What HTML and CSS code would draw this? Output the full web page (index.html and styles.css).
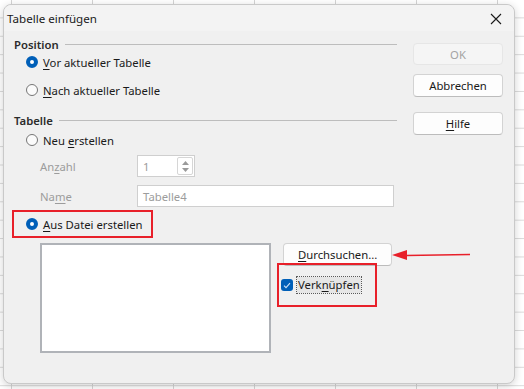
FILE: index.html
```html
<!DOCTYPE html>
<html>
<head>
  <title>Tabelle einfügen</title>
  <meta name="viewport" content="width=device-width, initial-scale=1.0">
  <link rel="stylesheet" href="styles.css">
</head>
<body>
  <div class="dialog">
    <div class="titlebar">
      <span class="title">Tabelle einfügen</span>
      <svg class="close" width="12" height="12" viewBox="0 0 12 12">
        <path d="M1 1 L11 11 M11 1 L1 11" stroke="#1a1a1a" stroke-width="1.1" fill="none"/>
      </svg>
    </div>

    <div class="content">
      <div class="main">
        <div class="group-head"><span>Position</span><span class="rule"></span></div>
        <div class="radio-row first">
          <span class="radio checked"></span><span><u>V</u>or aktueller Tabelle</span>
        </div>
        <div class="radio-row second">
          <span class="radio"></span><span><u>N</u>ach aktueller Tabelle</span>
        </div>

        <div class="group-head head2"><span>Tabelle</span><span class="rule"></span></div>
        <div class="radio-row third">
          <span class="radio"></span><span>Neu <u>e</u>rstellen</span>
        </div>
        <div class="field-row">
          <span class="field-label">An<u>z</u>ahl</span>
          <div class="spin">
            <span class="value">1</span>
            <span class="spin-btn">
              <svg width="7" height="4" viewBox="0 0 7 4"><path d="M0 4 L3.5 0 L7 4 Z" fill="#9a9a9a"/></svg>
              <svg width="7" height="4" viewBox="0 0 7 4"><path d="M0 0 L3.5 4 L7 0 Z" fill="#9a9a9a"/></svg>
            </span>
          </div>
        </div>
        <div class="field-row name-row">
          <span class="field-label">Na<u>m</u>e</span>
          <div class="textbox">Tabelle4</div>
        </div>
        <div class="radio-row marked">
          <span class="radio checked"></span><span><u>A</u>us Datei erstellen</span>
        </div>

        <div class="file-area">
          <div class="file-list"></div>
          <div class="file-side">
            <button class="btn browse" type="button"><u>D</u>urchsuchen...</button>
            <div class="check-row">
              <span class="checkbox">
                <svg width="8" height="7" viewBox="0 0 8 7"><path d="M1 3.6 L3 5.6 L7 1.2" stroke="#cfe3f7" stroke-width="1.1" fill="none"/></svg>
              </span>
              <span class="focus-label">Verk<u>n</u>üpfen</span>
            </div>
            <div class="mark-box"></div>
          </div>
        </div>
      </div>

      <div class="side">
        <button class="btn disabled" type="button">OK</button>
        <button class="btn" type="button">Abbrechen</button>
        <button class="btn help" type="button"><u>H</u>ilfe</button>
      </div>
    </div>
  </div>

  <svg class="arrow" width="80" height="12" viewBox="0 0 80 12">
    <path d="M78 5.5 L14 6.5" stroke="#e8202a" stroke-width="1.4" fill="none"/>
    <path d="M0 6 L15 1 L15 11 Z" fill="#e8202a"/>
  </svg>
</body>
</html>
```

FILE: styles.css
```css
body {
  margin: 0;
  width: 524px;
  height: 389px;
  overflow: hidden;
  font-family: "Noto Sans", "Open Sans", sans-serif;
  font-size: 11.3px;
  color: #1a1a1a;
  background-color: #ffffff;
  background-image:
    linear-gradient(to right, #d4d4d4 1px, transparent 1px),
    linear-gradient(to bottom, #dadada 1px, transparent 1px);
  background-size: 81px 100%, 100% 18.4px;
  background-position: 11px 0, 0 -1px;
  position: relative;
}

u {
  text-decoration: underline;
  text-underline-offset: 2px;
}

/* window */

.dialog {
  position: absolute;
  left: 3px;
  top: 4px;
  width: 512px;
  height: 380px;
  background: #f0f0f0;
  border: 1px solid #c9c9c9;
  border-radius: 8px;
  box-sizing: border-box;
  box-shadow: 0 2px 8px rgba(0, 0, 0, 0.18);
  display: flex;
  flex-direction: column;
}

.titlebar {
  height: 26px;
  display: flex;
  align-items: center;
  justify-content: space-between;
  padding: 0 12px 0 3px;
  background: #f3f3f3;
  border-radius: 8px 8px 0 0;
}

.title {
  font-size: 11.6px;
  color: #1a1a1a;
}

.close {
  margin-top: 2px;
}

.content {
  display: flex;
  padding: 0 11px 0 10px;
}

.main {
  width: 385px;
  display: flex;
  flex-direction: column;
}

/* group headers */

.group-head {
  height: 16px;
  margin-top: 5px;
  display: flex;
  align-items: center;
  gap: 6px;
  font-weight: 600;
  color: #2b2b2b;
}

.group-head.head2 {
  margin-top: 12px;
}

.group-head .rule {
  flex: 1;
  height: 1px;
  background: #bdbdbd;
  margin-top: 1px;
}

/* radios */

.radio-row {
  height: 20px;
  display: flex;
  align-items: center;
  gap: 5px;
  padding-left: 12px;
}

.radio-row.second {
  margin-top: 8px;
}

.radio-row.third {
  margin-top: 2px;
}

.radio {
  width: 12px;
  height: 12px;
  border-radius: 50%;
  border: 1px solid #767676;
  background: #fbfbfb;
  box-sizing: border-box;
}

.radio.checked {
  border: 4px solid #005fb8;
  background: #ffffff;
}

.radio-row.marked {
  margin-top: 3px;
  margin-left: -2px;
  width: 141px;
  height: 28px;
  border: 2px solid #e8202a;
  box-sizing: border-box;
}

/* fields */

.field-row {
  height: 22px;
  margin-top: 5px;
  display: flex;
  align-items: center;
  padding-left: 26px;
}

.field-row.name-row {
  margin-top: 8px;
}

.field-label {
  width: 97px;
  color: #9c9c9c;
}

.spin {
  width: 58px;
  height: 22px;
  box-sizing: border-box;
  border: 1px solid #cfcfcf;
  background: #ffffff;
  display: flex;
  align-items: center;
  justify-content: space-between;
  padding: 0 1px 0 5px;
  color: #9c9c9c;
}

.spin-btn {
  width: 16px;
  height: 18px;
  box-sizing: border-box;
  border: 1px solid #d6d6d6;
  border-radius: 2px;
  display: flex;
  flex-direction: column;
  align-items: center;
  justify-content: center;
  gap: 3px;
}

.textbox {
  width: 257px;
  height: 22px;
  box-sizing: border-box;
  border: 1px solid #cfcfcf;
  background: #ffffff;
  padding: 0 5px;
  display: flex;
  align-items: center;
  color: #9c9c9c;
}

/* file section */

.file-area {
  display: flex;
  margin-top: 5px;
  padding-left: 26px;
}

.file-list {
  width: 231px;
  height: 110px;
  box-sizing: border-box;
  border: 2px solid #b0b3b8;
  background: #ffffff;
}

.file-side {
  position: relative;
  padding-left: 12px;
  display: flex;
  flex-direction: column;
  align-items: flex-start;
}

.check-row {
  display: flex;
  align-items: center;
  gap: 4px;
  margin-top: 11px;
  margin-left: -2px;
}

.checkbox {
  width: 12px;
  height: 12px;
  border-radius: 3px;
  background: #005fb8;
  display: flex;
  align-items: center;
  justify-content: center;
}

.focus-label {
  outline: 1px dotted #5a5a5a;
  background: #e6e6e6;
  padding: 0 1px;
  line-height: 16px;
}

.mark-box {
  position: absolute;
  left: 6px;
  top: 20px;
  width: 100px;
  height: 44px;
  border: 2px solid #e8202a;
  box-sizing: border-box;
}

/* buttons */

.side {
  margin-left: 16px;
  display: flex;
  flex-direction: column;
  padding-top: 12px;
}

.btn {
  width: 90px;
  height: 23px;
  font-family: inherit;
  font-size: 11.3px;
  color: #1a1a1a;
  background: #fdfdfd;
  border: 1px solid #d3d3d3;
  border-bottom-color: #bcbcbc;
  border-radius: 4px;
  padding: 0;
  margin-bottom: 9px;
}

.btn.disabled {
  height: 22px;
  background: #f5f5f5;
  border-color: #e6e6e6;
  color: #a3a3a3;
}

.btn.help {
  margin-top: 6px;
}

.btn.browse {
  width: 109px;
  height: 23px;
  margin: 0;
  text-align: left;
  padding-left: 14px;
}

/* annotation arrow */

.arrow {
  position: absolute;
  left: 392px;
  top: 249px;
}
```
